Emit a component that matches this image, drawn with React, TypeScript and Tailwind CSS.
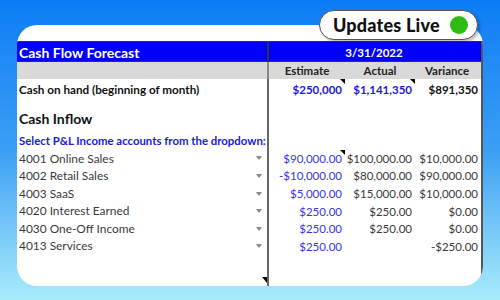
import React from "react";

const F = { fontFamily: "Lato, 'Noto Sans', sans-serif" };

function Tri() {
  return (
    <div className="absolute right-0 top-0 w-0 h-0 border-l-[5px] border-l-transparent border-t-[5px] border-t-black" />
  );
}

function Arrow() {
  return (
    <div className="w-0 h-0 border-l-[3.5px] border-r-[3.5px] border-t-[4px] border-l-transparent border-r-transparent border-t-[#888] mr-[5px]" />
  );
}

type Row = { label: string; est: string; act: string; vr: string; tri?: boolean };

const rows: Row[] = [
  { label: "4001 Online Sales", est: "$90,000.00", act: "$100,000.00", vr: "$10,000.00", tri: true },
  { label: "4002 Retail Sales", est: "-$10,000.00", act: "$80,000.00", vr: "$90,000.00" },
  { label: "4003 SaaS", est: "$5,000.00", act: "$15,000.00", vr: "$10,000.00" },
  { label: "4020 Interest Earned", est: "$250.00", act: "$250.00", vr: "$0.00" },
  { label: "4030 One-Off Income", est: "$250.00", act: "$250.00", vr: "$0.00" },
  { label: "4013 Services", est: "$250.00", act: "", vr: "-$250.00" },
];

const grid = "grid grid-cols-[250px_2px_76px_70px_64px]";

export default function App() {
  return (
    <div
      className="relative w-[500px] h-[300px] overflow-hidden bg-linear-to-b from-[#0a7cf6] via-[#3a9ff4] to-[#a8ecfa]"
      style={F}
    >
      <div className="pt-[25px] pl-[17px]">
        <div className="w-[466px] h-[261px] bg-white rounded-[20px] overflow-hidden pt-[16px] flex flex-col">
          <div className="flex-1 flex flex-col border-t border-[#333] border-r-2 border-r-[#555]">
            {/* header */}
            <div className={`${grid} h-[20px] bg-[#0000ff] border-b border-[#333]`}>
              <div className="pl-[2px] flex items-center text-white font-bold text-[14px]">
                Cash Flow Forecast
              </div>
              <div className="bg-[#333]" />
              <div className="col-span-3 flex items-center justify-center text-white font-bold text-[11.5px]">
                3/31/2022
              </div>
            </div>
            {/* sub header */}
            <div className={`${grid} h-[17px] bg-[#d9d9d9] text-[11.5px] font-bold text-[#222]`}>
              <div />
              <div className="bg-[#888]" />
              <div className="flex items-end justify-center">Estimate</div>
              <div className="flex items-end justify-center">Actual</div>
              <div className="flex items-end justify-center">Variance</div>
            </div>
            {/* cash on hand */}
            <div className={`${grid} h-[21px] text-[11.5px] font-bold`}>
              <div className="pl-[2px] flex items-center text-[#111] text-[11.7px]">
                Cash on hand (beginning of month)
              </div>
              <div className="bg-[#666]" />
              <div className="relative flex items-center justify-end pr-[3px] text-[#1a1ad8]">
                $250,000
                <Tri />
              </div>
              <div className="relative flex items-center justify-end pr-[3px] text-[#1a1ad8]">
                $1,141,350
                <Tri />
              </div>
              <div className="flex items-center justify-end pr-[1px] text-[#111]">$891,350</div>
            </div>
            {/* cash inflow */}
            <div className={`${grid} h-[31px]`}>
              <div className="pl-[2px] flex items-end pb-[2px] text-[14px] font-bold text-[#111]">
                Cash Inflow
              </div>
              <div className="bg-[#666]" />
              <div className="col-span-3" />
            </div>
            {/* select */}
            <div className={`${grid} h-[18.5px]`}>
              <div className="pl-[2px] flex items-center text-[11.4px] font-bold text-[#1a1ae6] whitespace-nowrap">
                Select P&amp;L Income accounts from the dropdown:
              </div>
              <div className="bg-[#666]" />
              <div className="col-span-3" />
            </div>
            {rows.map((r) => (
              <div key={r.label} className={`${grid} h-[17.6px] text-[11.5px]`}>
                <div className="pl-[2px] flex items-center justify-between text-[#3a3a3a] text-[11.9px]">
                  <span>{r.label}</span>
                  <Arrow />
                </div>
                <div className="bg-[#666]" />
                <div className="relative flex items-center justify-end pr-[3px] text-[#3535ee]">
                  {r.est}
                  {r.tri && <Tri />}
                </div>
                <div className="flex items-center justify-end pr-[3px] text-[#3a3a3a]">{r.act}</div>
                <div className="flex items-center justify-end pr-[1px] text-[#3a3a3a]">{r.vr}</div>
              </div>
            ))}
            <div className={`${grid} flex-1`}>
              <div className="relative">
                <div className="absolute right-0 top-[22px] w-0 h-0 border-l-[5px] border-l-transparent border-t-[6px] border-t-black" />
              </div>
              <div className="bg-[#666]" />
              <div className="col-span-3" />
            </div>
          </div>
        </div>
      </div>

      {/* Updates Live pill */}
      <div className="absolute left-[319px] top-[10px] w-[159px] h-[30px] rounded-full bg-white border border-[#555] shadow-[2px_2px_3px_rgba(0,0,0,0.25)] flex items-center pl-[13px] pr-[9px] justify-between">
        <span className="text-[18px] font-black text-[#111] tracking-[0.2px]">Updates Live</span>
        <span className="w-[18px] h-[18px] rounded-full bg-[#2ebc12]" />
      </div>
    </div>
  );
}
